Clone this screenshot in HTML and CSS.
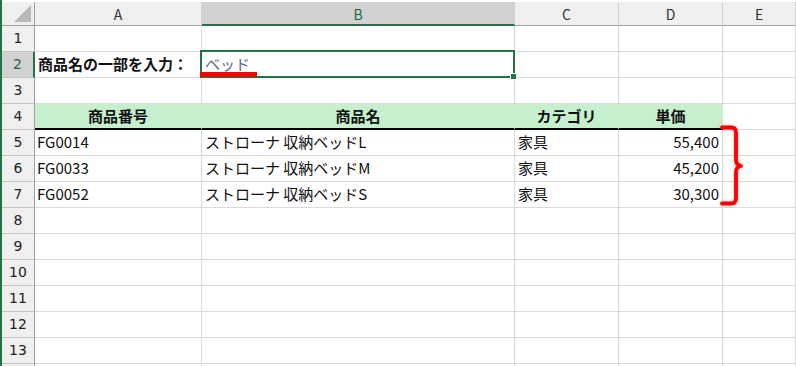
FILE: index.html
```html
<!DOCTYPE html>
<html lang="ja">
<head>
  <meta charset="UTF-8">
  <title>商品検索</title>
  <link rel="stylesheet" href="styles.css">
</head>
<body>
  <div class="sheet">
    <!-- column headers -->
    <div class="corner">
      <svg width="18" height="18" viewBox="0 0 18 18"><polygon points="17,0 17,17 0,17" fill="#b9b9b9"/></svg>
    </div>
    <div class="ch">A</div>
    <div class="ch sel">B</div>
    <div class="ch">C</div>
    <div class="ch">D</div>
    <div class="ch">E</div>

    <!-- row 1 -->
    <div class="rh">1</div>
    <div class="c"></div><div class="c"></div><div class="c"></div><div class="c"></div><div class="c"></div>

    <!-- row 2 -->
    <div class="rh sel">2</div>
    <div class="c label">商品名の一部を入力：</div>
    <div class="c active">
      <span class="input">ベッド</span>
      <div class="selbox"><span class="handle"></span></div>
      <div class="mark"></div>
    </div>
    <div class="c"></div><div class="c"></div><div class="c"></div>

    <!-- row 3 -->
    <div class="rh">3</div>
    <div class="c"></div><div class="c"></div><div class="c"></div><div class="c"></div><div class="c"></div>

    <!-- row 4 -->
    <div class="rh">4</div>
    <div class="c th">商品番号</div>
    <div class="c th">商品名</div>
    <div class="c th">カテゴリ</div>
    <div class="c th">単価</div>
    <div class="c"></div>

    <!-- row 5 -->
    <div class="rh">5</div>
    <div class="c first">FG0014</div>
    <div class="c">ストローナ 収納ベッドL</div>
    <div class="c">家具</div>
    <div class="c num">55,400</div>
    <div class="c"></div>

    <!-- row 6 -->
    <div class="rh">6</div>
    <div class="c first">FG0033</div>
    <div class="c">ストローナ 収納ベッドM</div>
    <div class="c">家具</div>
    <div class="c num">45,200</div>
    <div class="c"></div>

    <!-- row 7 -->
    <div class="rh">7</div>
    <div class="c first">FG0052</div>
    <div class="c">ストローナ 収納ベッドS</div>
    <div class="c">家具</div>
    <div class="c num">30,300</div>
    <div class="c"></div>

    <div class="rh">8</div>
    <div class="c"></div><div class="c"></div><div class="c"></div><div class="c"></div><div class="c"></div>
    <div class="rh">9</div>
    <div class="c"></div><div class="c"></div><div class="c"></div><div class="c"></div><div class="c"></div>
    <div class="rh">10</div>
    <div class="c"></div><div class="c"></div><div class="c"></div><div class="c"></div><div class="c"></div>
    <div class="rh">11</div>
    <div class="c"></div><div class="c"></div><div class="c"></div><div class="c"></div><div class="c"></div>
    <div class="rh">12</div>
    <div class="c"></div><div class="c"></div><div class="c"></div><div class="c"></div><div class="c"></div>
    <div class="rh">13</div>
    <div class="c"></div><div class="c"></div><div class="c"></div><div class="c"></div><div class="c"></div>
    <!-- row 14, only its top edge is in view -->
    <div class="rh"></div>
    <div class="c"></div><div class="c"></div><div class="c"></div><div class="c"></div><div class="c"></div>

    <!-- red brace over the result rows -->
    <svg class="brace" width="30" height="90" viewBox="0 0 30 90">
      <path d="M3,5.5 H12 Q17,5.5 17,10.5 V38 Q17,43 22,44 Q17,45 17,50 V76 Q17,81.5 12,81.5 H3"
            fill="none" stroke="#ff0000" stroke-width="3.8" stroke-linecap="round" stroke-linejoin="round"/>
    </svg>
  </div>
</body>
</html>
```

FILE: styles.css
```css
/* Reset */
* {
  margin: 0;
  padding: 0;
  box-sizing: border-box;
}

body {
  background-color: #ffffff;
  color: #111;
  font-family: "Noto Sans CJK JP", "Noto Sans", sans-serif;
  overflow: hidden;
}

/* Sheet grid */
.sheet {
  position: relative;
  display: grid;
  grid-template-columns: 33px 167px 313px 104px 104px 73px;
  grid-template-rows: 24px repeat(14, 26px);
  padding-top: 2px;
  border-left: 2px solid #217346;
  width: 796px;
  height: 366px;
  overflow: hidden;
}

/* Headers */
.corner {
  display: flex;
  align-items: flex-end;
  justify-content: flex-end;
  padding: 0 2px 2px 0;
  background-color: #efefef;
  border-right: 1px solid #9f9f9f;
  border-bottom: 1px solid #9f9f9f;
}

.ch {
  background-color: #efefef;
  border-right: 1px solid #d2d2d2;
  border-bottom: 1px solid #9f9f9f;
  text-align: center;
  font-size: 14px;
  line-height: 24px;
  color: #333;
}

.ch.sel {
  background-color: #d2d2d2;
  border-bottom: 2px solid #217346;
  color: #1d6b3f;
}

.rh {
  background-color: #efefef;
  border-right: 1px solid #9f9f9f;
  border-bottom: 1px solid #c4c4c4;
  text-align: center;
  font-family: "DejaVu Sans", sans-serif;
  font-size: 14px;
  line-height: 25px;
  color: #222;
}

.rh.sel {
  background-color: #d2d2d2;
  border-right: 2px solid #217346;
  color: #1d6b3f;
}

/* Cells */
.c {
  border-right: 1px solid #dadada;
  border-bottom: 1px solid #dadada;
  padding: 0 3px;
  font-size: 15px;
  line-height: 24px;
  white-space: nowrap;
}

.c.first {
  padding-left: 2px;
}

.label {
  font-weight: bold;
  padding-left: 3px;
}

.num {
  text-align: right;
}

.th {
  background-color: #c6efce;
  border-right-color: #c6efce;
  border-bottom: 2px solid #000;
  font-weight: bold;
  text-align: center;
}

/* Active cell B2 */
.active {
  position: relative;
}

.input {
  color: #5a6b88;
}

.selbox {
  position: absolute;
  top: -2px;
  left: -2px;
  right: -1px;
  bottom: -1px;
  border: 2px solid #217346;
}

.handle {
  position: absolute;
  right: -3px;
  bottom: -3px;
  width: 6px;
  height: 6px;
  background-color: #217346;
  border: 1px solid #fff;
  border-right: none;
  border-bottom: none;
}

.mark {
  position: absolute;
  left: -2px;
  top: 20px;
  width: 57px;
  height: 5px;
  background-color: #ff0000;
}

/* Brace */
.brace {
  position: absolute;
  left: 717px;
  top: 122px;
  filter: drop-shadow(0 0 1.5px rgba(255, 0, 0, 0.35));
}
```
